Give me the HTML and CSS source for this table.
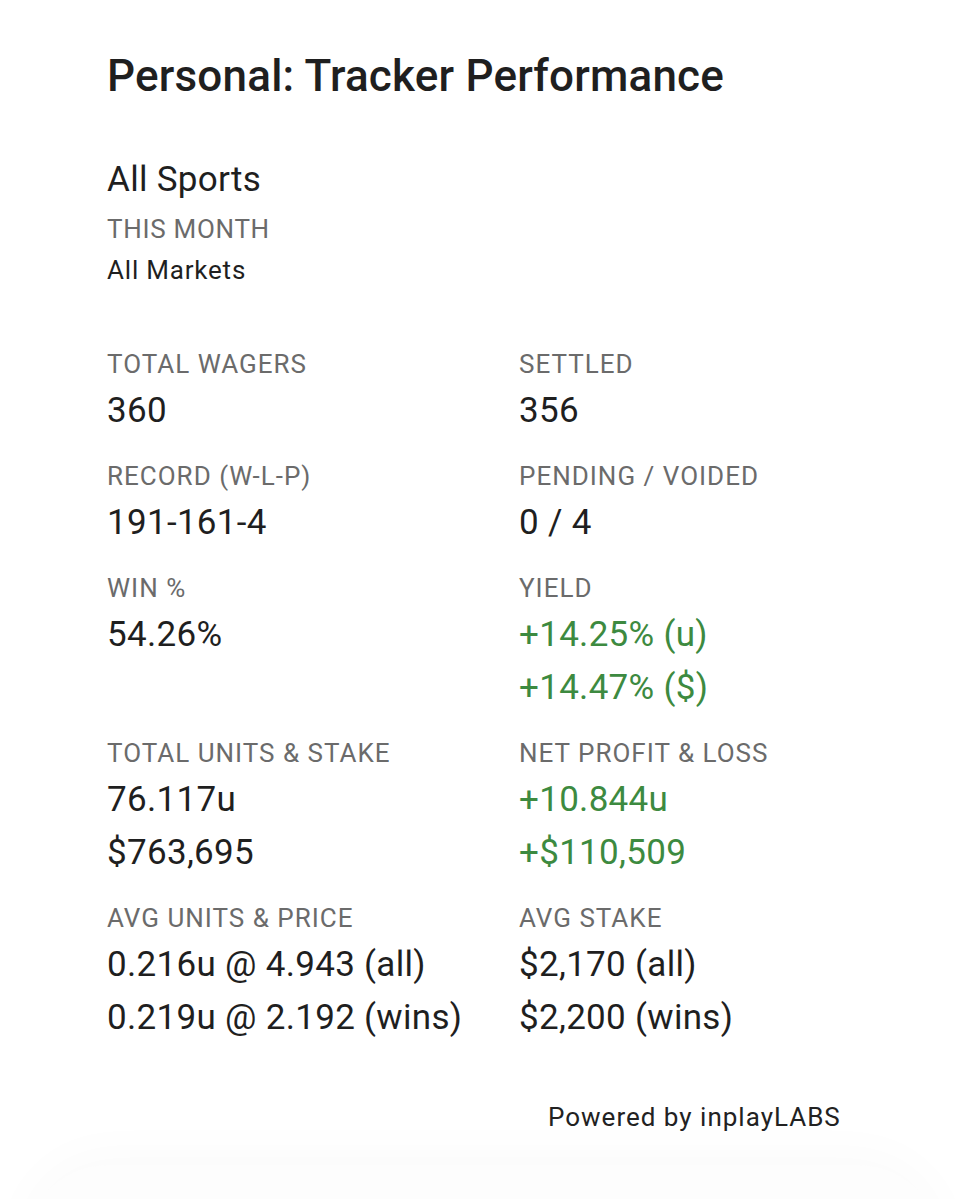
FILE: index.html
```html
<!DOCTYPE html>
<html>
<head>
<meta charset="utf-8">
<link rel="stylesheet" href="styles.css">
</head>
<body>
<div class="page">
  <main class="card">
    <h1 class="title">Personal: Tracker Performance</h1>
    <section class="filters">
      <div class="sport">All Sports</div>
      <div class="period">THIS MONTH</div>
      <div class="market">All Markets</div>
    </section>
    <section class="stats">
      <div class="stat">
        <div class="label">TOTAL WAGERS</div>
        <div class="value">360</div>
      </div>
      <div class="stat">
        <div class="label">SETTLED</div>
        <div class="value">356</div>
      </div>
      <div class="stat">
        <div class="label">RECORD (W-L-P)</div>
        <div class="value">191-161-4</div>
      </div>
      <div class="stat">
        <div class="label">PENDING / VOIDED</div>
        <div class="value">0 / 4</div>
      </div>
      <div class="stat">
        <div class="label">WIN %</div>
        <div class="value">54.26%</div>
      </div>
      <div class="stat">
        <div class="label">YIELD</div>
        <div class="value positive">+14.25% (u)</div>
        <div class="value positive">+14.47% ($)</div>
      </div>
      <div class="stat">
        <div class="label">TOTAL UNITS &amp; STAKE</div>
        <div class="value">76.117u</div>
        <div class="value">$763,695</div>
      </div>
      <div class="stat">
        <div class="label">NET PROFIT &amp; LOSS</div>
        <div class="value positive">+10.844u</div>
        <div class="value positive">+$110,509</div>
      </div>
      <div class="stat">
        <div class="label">AVG UNITS &amp; PRICE</div>
        <div class="value">0.216u @ 4.943 (all)</div>
        <div class="value">0.219u @ 2.192 (wins)</div>
      </div>
      <div class="stat">
        <div class="label">AVG STAKE</div>
        <div class="value">$2,170 (all)</div>
        <div class="value">$2,200 (wins)</div>
      </div>
    </section>
    <footer class="powered">Powered by inplayLABS</footer>
  </main>
  <div class="next-card"></div>
</div>
</body>
</html>
```

FILE: styles.css
```css
html, body {
  margin: 0;
  padding: 0;
  background: #ffffff;
}

body {
  font-family: Roboto, "Noto Sans", Arial, sans-serif;
  color: #212121;
  width: 966px;
  height: 1199px;
  overflow: hidden;
}

.page {
  position: relative;
  height: 1199px;
  overflow: hidden;
}

.card {
  padding: 51px 0 0 107px;
  display: flex;
  flex-direction: column;
}

.title {
  margin: 0;
  font-size: 44px;
  font-weight: 500;
  line-height: 50px;
  color: #1f1f1f;
  letter-spacing: 0.2px;
}

.filters {
  margin-top: 59px;
  display: flex;
  flex-direction: column;
}

.sport {
  font-size: 35px;
  line-height: 40px;
  color: #1f1f1f;
  letter-spacing: 0.3px;
}

.period {
  margin-top: 12px;
  font-size: 26px;
  line-height: 34px;
  color: #6b6b6b;
  letter-spacing: 0.7px;
}

.market {
  margin-top: 7px;
  font-size: 26px;
  line-height: 34px;
  color: #1f1f1f;
  letter-spacing: 0.8px;
}

.stats {
  margin-top: 60px;
  display: grid;
  grid-template-columns: 412px 1fr;
  row-gap: 22px;
}

.stat {
  display: flex;
  flex-direction: column;
}

.label {
  font-size: 26px;
  line-height: 34px;
  color: #6b6b6b;
  letter-spacing: 1px;
  margin-bottom: 3px;
}

.value {
  font-size: 35px;
  line-height: 53px;
  color: #1f1f1f;
  letter-spacing: 0.3px;
}

.positive {
  color: #3d8a40;
}

.powered {
  margin-top: 56px;
  align-self: flex-start;
  margin-left: 441px;
  font-size: 26px;
  line-height: 34px;
  color: #222222;
  letter-spacing: 1px;
}

.next-card {
  position: absolute;
  left: 20px;
  right: 20px;
  top: 1165px;
  height: 200px;
  border-radius: 90px;
  background: #fdfdfd;
  box-shadow: 0 -14px 50px rgba(0, 0, 0, 0.018);
}
```
